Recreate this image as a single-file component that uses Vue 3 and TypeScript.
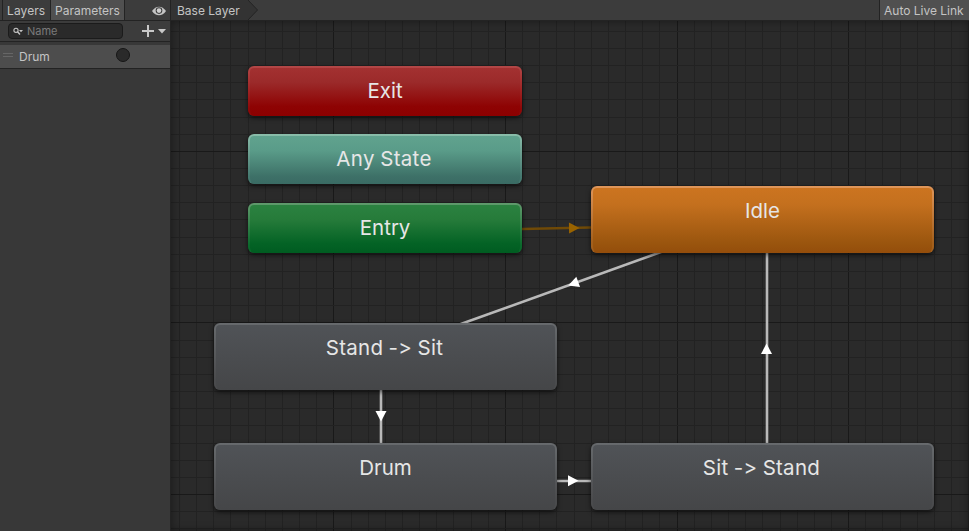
<script setup lang="ts">
interface StateNode { id: string; label: string; x: number; y: number; w: number; h: number }
interface Edge { id: string; x1: number; y1: number; x2: number; y2: number; ax: number; ay: number; angle: number; entry?: boolean }

const nodes: StateNode[] = [
  { id: 'exit', label: 'Exit', x: 77, y: 45, w: 274, h: 50 },
  { id: 'any', label: 'Any State', x: 77, y: 113, w: 274, h: 50 },
  { id: 'entry', label: 'Entry', x: 77, y: 182, w: 274, h: 50 },
  { id: 'idle', label: 'Idle', x: 420, y: 165, w: 343, h: 67 },
  { id: 'stand-sit', label: 'Stand -> Sit', x: 43, y: 302, w: 343, h: 67 },
  { id: 'drum', label: 'Drum', x: 43, y: 422, w: 343, h: 67 },
  { id: 'sit-stand', label: 'Sit -> Stand', x: 420, y: 422, w: 343, h: 67 },
]

const edges: Edge[] = [
  { id: 'e1', x1: 340, y1: 208.2, x2: 430, y2: 206.3, ax: 403.5, ay: 207, angle: -1, entry: true },
  { id: 'e2', x1: 510, y1: 223.8, x2: 271, y2: 309.8, ax: 402, ay: 262.8, angle: 160.2 },
  { id: 'e3', x1: 210, y1: 360, x2: 210, y2: 430, ax: 210, ay: 395.5, angle: 90 },
  { id: 'e4', x1: 380, y1: 460, x2: 425, y2: 460, ax: 402.5, ay: 459.7, angle: 0 },
  { id: 'e5', x1: 596, y1: 430, x2: 596, y2: 225, ax: 595.5, ay: 327.5, angle: -90 },
]

const step = 17.16
const columns = Array.from({ length: 47 }, (_, i) => ({ at: Math.floor(8.4 + i * step), major: i % 10 === 9 }))
const rows = Array.from({ length: 30 }, (_, i) => ({ at: Math.floor(10.2 + i * step), major: i % 10 === 7 }))
</script>

<template>
  <div class="animator">
    <aside class="sidebar">
      <div class="tabs">
        <span class="tab">Layers</span>
        <span class="tab active">Parameters</span>
        <svg class="eye" width="14" height="10" viewBox="0 0 14 10">
          <path d="M0 5Q3 .7 7 .7T14 5Q11 9.3 7 9.3T0 5Z" fill="#c4c4c4" />
          <circle cx="7" cy="4.6" r="3.3" fill="#3c3c3c" />
          <circle cx="7" cy="4.6" r="2.3" fill="#d0d0d0" />
        </svg>
      </div>
      <div class="tools">
        <div class="search">
          <svg width="10" height="9" viewBox="0 0 10 9">
            <circle cx="3" cy="3.3" r="2.1" fill="none" stroke="#c4c4c4" stroke-width="1.1" />
            <path d="M4.5 4.8L7 7.5" stroke="#c4c4c4" stroke-width="1.4" />
            <path d="M6 3h4L8 5.2Z" fill="#c4c4c4" />
          </svg>
          <span>Name</span>
        </div>
        <svg class="add" width="25" height="12" viewBox="0 0 25 12">
          <path d="M0 6h12M6 0v12" stroke="#c8c8c8" stroke-width="2" />
          <path d="M16 4h8l-4 4.5Z" fill="#c8c8c8" />
        </svg>
      </div>
      <div class="parameter">
        <span class="grip"></span>
        <span class="name">Drum</span>
        <span class="trigger"></span>
      </div>
    </aside>
    <main class="main">
      <header class="crumbs">
        <span class="crumb">Base Layer</span>
        <svg class="chevron" width="12" height="20" viewBox="0 0 12 20">
          <path d="M0 0L9.5 10L0 20Z" fill="#333" />
          <path d="M0 0L9.5 10L0 20" fill="none" stroke="#242424" />
        </svg>
        <span class="live">Auto Live Link</span>
      </header>
      <section class="graph">
        <svg class="lines" width="798" height="510" viewBox="0 0 798 510">
          <g shape-rendering="crispEdges">
            <rect v-for="c in columns" :key="'c' + c.at" :x="c.at" y="0" width="1" height="510" :class="c.major ? 'major' : 'minor'" />
            <rect v-for="r in rows" :key="'r' + r.at" x="0" :y="r.at" width="798" height="1" :class="r.major ? 'major' : 'minor'" />
          </g>
          <g v-for="e in edges" :key="e.id" :class="e.entry ? 'edge from-entry' : 'edge'">
            <line :x1="e.x1" :y1="e.y1" :x2="e.x2" :y2="e.y2" />
            <path d="M-5.5 -5.5L5 0L-5.5 5.5Z" :transform="`translate(${e.ax} ${e.ay}) rotate(${e.angle})`" />
          </g>
        </svg>
        <div
          v-for="n in nodes" :key="n.id" class="node" :class="[n.id, { phrase: n.label.includes(' ') }]"
          :style="{ left: n.x + 'px', top: n.y + 'px', width: n.w + 'px', height: n.h + 'px' }"
        >{{ n.label }}</div>
      </section>
    </main>
  </div>
</template>

<style>
body { margin: 0; background: #2a2a2a; overflow: hidden; }
</style>

<style scoped>
.animator { display: flex; width: 969px; height: 531px; font: 12px/20px Inter, sans-serif; color: #c4c4c4; overflow: hidden; }
.animator * { box-sizing: border-box; }
.sidebar { width: 171px; background: #383838; border-right: 1px solid #232323; }
.tabs { display: flex; height: 21px; background: #3c3c3c; border-bottom: 1px solid #232323; padding-left: 2px; }
.tab { border-left: 1px solid #232323; padding-left: 4px; width: 48px; line-height: 21px; letter-spacing: 0; white-space: nowrap; }
.tab:first-child { letter-spacing: 0.1px; }
.tab.active { width: 75px; background: #505050; border-right: 1px solid #232323; }
.eye { margin: 6px 0 0 27px; }
.tools { display: flex; align-items: center; height: 21px; border-bottom: 1px solid #232323; background: #3c3c3c; padding-left: 8px; }
.search { display: flex; align-items: center; width: 115px; height: 16px; border: 1px solid #1b1b1b; border-radius: 4px; background: #2a2a2a; padding-left: 4px; gap: 4px; color: #7b7b7b; font-size: 11px; line-height: 14px; letter-spacing: 0; }
.add { margin-left: 19px; }
.parameter { display: flex; align-items: center; height: 24px; margin-top: 3px; background: #4d4d4d; border-bottom: 1px solid #232323; }
.grip { width: 10px; height: 4px; margin: -3px 0 0 3px; border-top: 1px solid #666; border-bottom: 1px solid #666; }
.name { width: 97px; margin-left: 6px; }
.trigger { width: 14px; height: 14px; margin-top: -3px; border: 1px solid #161616; border-radius: 50%; background: #2a2a2a; }
.main { display: flex; flex-direction: column; width: 798px; }
.crumbs { display: flex; height: 21px; background: #3c3c3c; border-bottom: 1px solid #232323; }
.crumb { width: 77px; padding-left: 6px; background: #333; line-height: 21px; white-space: nowrap; }
.live { width: 90px; margin-left: auto; padding-left: 4px; border-left: 1px solid #232323; background: #505050; line-height: 21px; white-space: nowrap; }
.graph { position: relative; height: 510px; background: #2a2a2a; overflow: hidden; }
.graph::after { content: ''; position: absolute; inset: 0; box-shadow: inset 0 0 9px rgba(0, 0, 0, 0.4); pointer-events: none; }
.lines { display: block; }
.minor { fill: #222; }
.major { fill: #191919; }
.edge line { stroke: #b9b9b9; stroke-width: 2.6; }
.edge path { fill: #fff; }
.from-entry line { stroke: #704a07; }
.from-entry path { fill: #996300; }
.node {
  --rim: #676a6d;
  --fill: #505357, #454648;
  --low: #4a4b4d;
  position: absolute;
  border: 2px solid transparent;
  border-bottom: 0;
  border-radius: 6px;
  background: linear-gradient(var(--fill)) padding-box, linear-gradient(var(--rim), var(--low) 85%) border-box;
  box-shadow: 0 2px 5px rgba(0, 0, 0, 0.6);
  color: #e6e6e6;
  font-size: 20.5px;
  font-weight: 400;
  line-height: 46px;
  text-align: center;
  font-kerning: none;
  font-feature-settings: 'calt' 0;
  white-space: pre;
}
.phrase { letter-spacing: 0.3px; word-spacing: -0.8px; padding-right: 2px; }
.exit { --rim: #b34747; --low: #8e0808; --fill: #a33131, #9b2a2a 30%, #8e0303 80%, #8c0000; }
.any { --rim: #8abdaa; --low: #457970; --fill: #60a28e, #5a9c89 30%, #3d7067 85%, #3a6b64; }
.entry { --rim: #609a6c; --low: #0a692b; --fill: #2b8240, #267b3a 30%, #046325 80%, #005c21; }
.idle { --rim: #df965a; --low: #a35f1c; --fill: #cc7420, #c4701e 25%, #9a550e 85%, #944d0b; }
</style>
